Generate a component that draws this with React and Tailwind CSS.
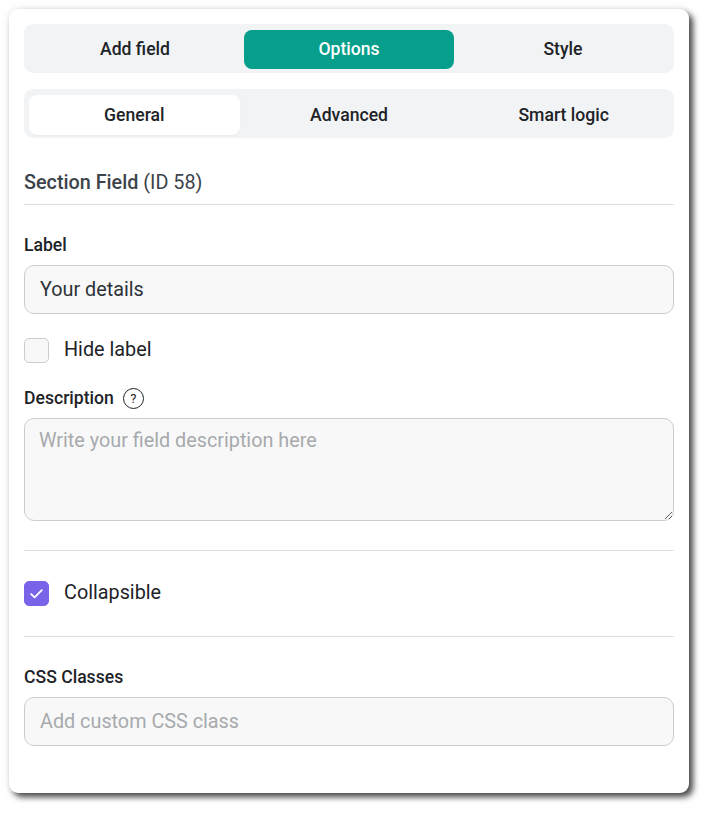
import { useState } from 'react'

const TOP_TABS = ['Add field', 'Options', 'Style']
const SUB_TABS = ['General', 'Advanced', 'Smart logic']

function Checkbox({ checked, onChange, label }) {
  return (
    <label className="flex items-center gap-[15px] cursor-pointer select-none">
      <span
        onClick={onChange}
        className={`flex items-center justify-center w-[25px] h-[25px] rounded-[5px] border ${
          checked ? 'bg-[#7964e9] border-[#7964e9]' : 'bg-[#f8f8f8] border-[#c9ccd1]'
        }`}
      >
        {checked && (
          <svg width="17" height="17" viewBox="0 0 16 16" fill="none">
            <path d="M3 8.5l3.2 3.2L13 4.8" stroke="#fff" strokeWidth="1.7" strokeLinecap="round" strokeLinejoin="round" />
          </svg>
        )}
      </span>
      <span className="text-[19.8px] leading-[26px] text-[#1d2327]">{label}</span>
    </label>
  )
}

export default function App() {
  const [tab, setTab] = useState('Options')
  const [sub, setSub] = useState('General')
  const [hideLabel, setHideLabel] = useState(false)
  const [collapsible, setCollapsible] = useState(true)
  const [label, setLabel] = useState('Your details')

  return (
    <div className="min-h-screen bg-white p-[9px]" style={{ fontFamily: 'Roboto, "Liberation Sans", sans-serif' }}>
      <div className="w-[680px] rounded-[9px] bg-white px-[15px] pt-[15px] pb-[47px] shadow-[4px_4px_6px_rgba(0,0,0,0.72),0_0_10px_rgba(0,0,0,0.08)]">
        {/* Top tabs */}
        <div className="flex gap-[4px] rounded-[9px] bg-[#f2f3f5] px-[6px] pt-[6px] pb-[4px]">
          {TOP_TABS.map(t => (
            <button
              key={t}
              onClick={() => setTab(t)}
              className={`flex-1 h-[39px] rounded-[8px] text-[17.6px] font-medium ${
                tab === t ? 'bg-[#079e8c] text-white' : 'text-[#1d2327]'
              }`}
            >
              {t}
            </button>
          ))}
        </div>

        {/* Sub tabs */}
        <div className="mt-[16px] flex gap-[4px] rounded-[9px] bg-[#f2f3f5] px-[5px] pt-[6px] pb-[3px]">
          {SUB_TABS.map(t => (
            <button
              key={t}
              onClick={() => setSub(t)}
              className={`flex-1 h-[40px] rounded-[8px] text-[17.6px] font-medium ${
                sub === t ? 'bg-white text-[#1d2327] shadow-[0_1px_2px_rgba(0,0,0,0.04)]' : 'text-[#1d2327]'
              }`}
            >
              {t}
            </button>
          ))}
        </div>

        {/* Heading */}
        <div className="mt-[31px] border-b border-[#e0e0e0] pb-[7px]">
          <h2 className="text-[19.8px] leading-[28px] text-[#3c434a]">
            <span className="font-medium">Section Field</span> (ID 58)
          </h2>
        </div>

        {/* Label */}
        <div className="mt-[28px] text-[17.6px] leading-[24px] font-medium text-[#1d2327]">Label</div>
        <input
          value={label}
          onChange={e => setLabel(e.target.value)}
          className="mt-[8px] block w-full h-[49px] rounded-[10px] border border-[#c9ccd1] bg-[#f8f8f8] px-[15px] text-[19.8px] text-[#2c3338] outline-none"
        />

        <div className="mt-[23px]">
          <Checkbox checked={hideLabel} onChange={() => setHideLabel(v => !v)} label="Hide label" />
        </div>

        {/* Description */}
        <div className="mt-[23px] flex items-center gap-[9px] text-[17.6px] leading-[24px] font-medium text-[#1d2327]">
          Description
          <span className="flex items-center justify-center w-[21px] h-[21px] rounded-full border-[1.5px] border-[#1d2327] text-[13px] leading-none font-normal">?</span>
        </div>
        <textarea
          placeholder="Write your field description here"
          className="mt-[8px] block w-full h-[103px] rounded-[10px] border border-[#c9ccd1] bg-[#f8f8f8] px-[14px] pt-[8px] text-[19.8px] leading-[28px] text-[#2c3338] placeholder:text-[#a7aaad] outline-none"
        />

        <div className="mt-[29px] border-t border-[#e0e0e0]" />

        <div className="mt-[29px]">
          <Checkbox checked={collapsible} onChange={() => setCollapsible(v => !v)} label="Collapsible" />
        </div>

        <div className="mt-[30px] border-t border-[#e0e0e0]" />

        {/* CSS classes */}
        <div className="mt-[28px] text-[17.6px] leading-[24px] font-medium text-[#1d2327]">CSS Classes</div>
        <input
          placeholder="Add custom CSS class"
          className="mt-[8px] block w-full h-[49px] rounded-[10px] border border-[#c9ccd1] bg-[#f8f8f8] px-[15px] text-[19.8px] text-[#2c3338] placeholder:text-[#a7aaad] outline-none"
        />
      </div>
    </div>
  )
}
